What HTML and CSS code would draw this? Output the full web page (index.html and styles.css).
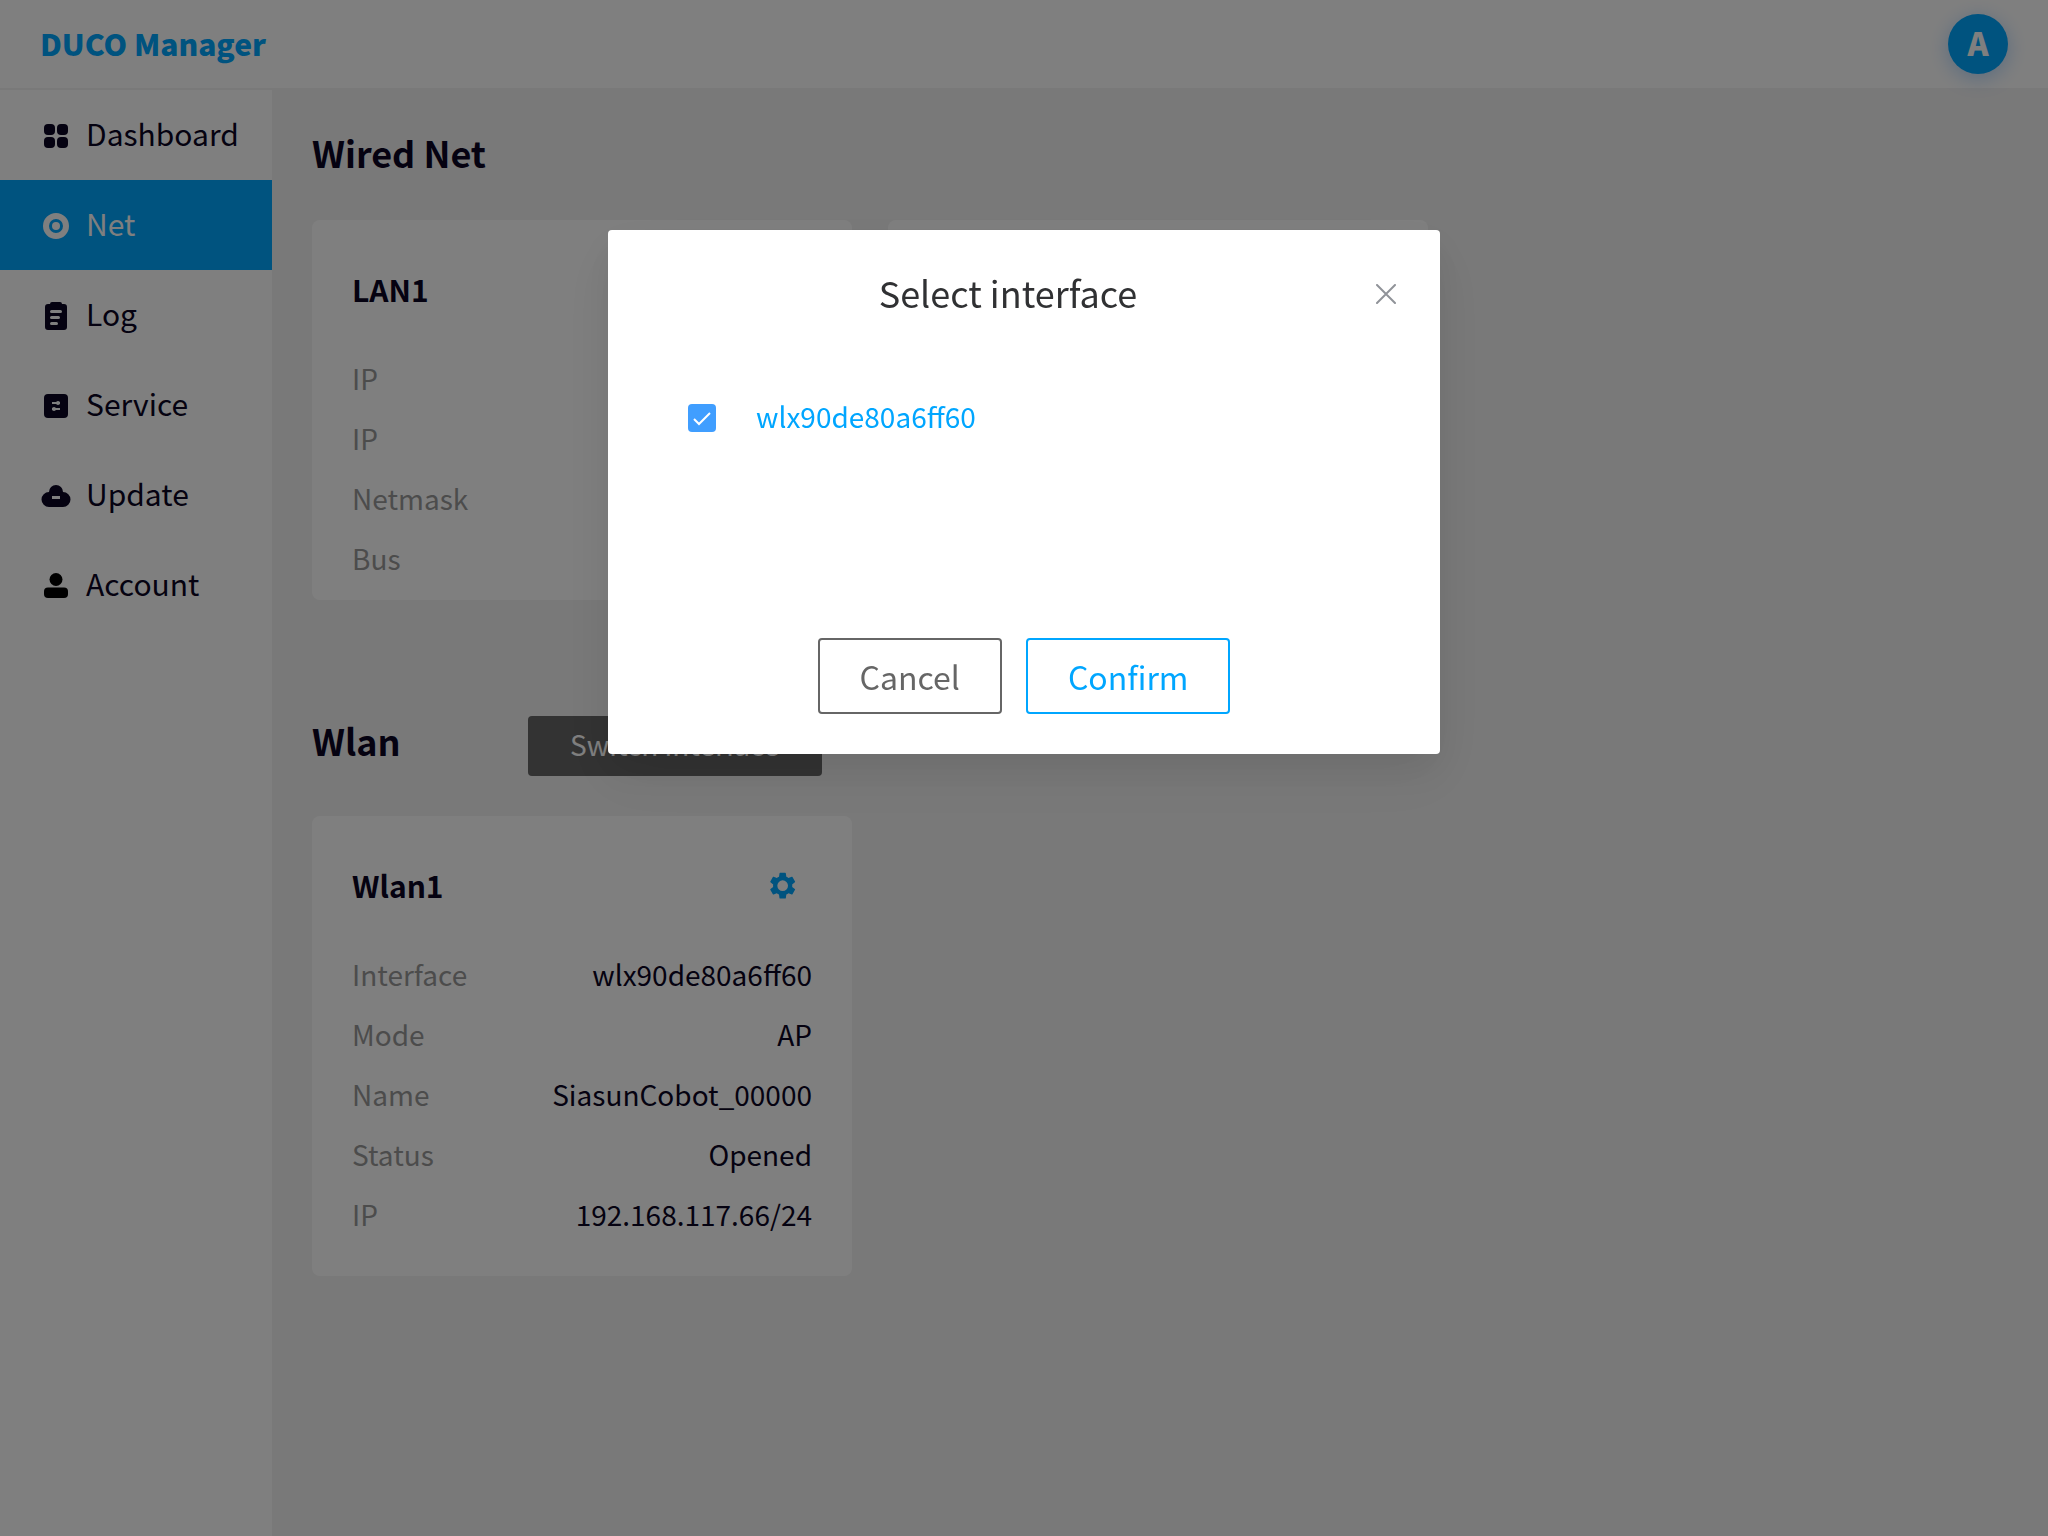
FILE: index.html
```html
<!DOCTYPE html>
<html lang="en">
<head>
<meta charset="utf-8">
<meta name="viewport" content="width=device-width, initial-scale=1">
<title>DUCO Manager</title>
<link rel="stylesheet" href="styles.css">
</head>
<body>
<div class="app">
  <header class="header">
    <a class="brand" href="#">DUCO Manager</a>
    <button class="avatar" type="button" aria-label="Account menu">A</button>
  </header>
  <div class="body">
    <nav class="sidebar">
      <a class="nav-item" href="#">
        <svg class="nav-icon" viewBox="0 0 28 28"><rect x="2" y="3" width="11" height="11" rx="4"/><rect x="15" y="3" width="11" height="11" rx="4"/><rect x="2" y="16" width="11" height="11" rx="4"/><rect x="15" y="16" width="11" height="11" rx="4"/></svg>
        <span class="nav-label">Dashboard</span>
      </a>
      <a class="nav-item nav-item--active" href="#">
        <svg class="nav-icon" viewBox="0 0 28 28"><circle cx="14" cy="15" r="10" fill="none" stroke="currentColor" stroke-width="6"/><circle cx="14" cy="15" r="4"/></svg>
        <span class="nav-label">Net</span>
      </a>
      <a class="nav-item" href="#">
        <svg class="nav-icon" viewBox="0 0 28 28"><path fill-rule="evenodd" d="M8 3q0-2 2-2h8q2 0 2 2h2q3 0 3 3v20q0 3-3 3H6q-3 0-3-3V6q0-3 3-3zM9.500 9a1.500 1.500 0 0 0 0 3h9a1.500 1.500 0 0 0 0-3zM9.500 15a1.500 1.500 0 0 0 0 3h7a1.500 1.500 0 0 0 0-3zM9.500 21a1.500 1.500 0 0 0 0 3h5a1.500 1.500 0 0 0 0-3z"/></svg>
        <span class="nav-label">Log</span>
      </a>
      <a class="nav-item" href="#">
        <svg class="nav-icon" viewBox="0 0 28 28"><rect x="2" y="3" width="24" height="24" rx="4"/><g fill="#fff"><rect x="10" y="11" width="8" height="2"/><circle cx="16" cy="12" r="2"/><rect x="10" y="17" width="8" height="2"/><circle cx="12" cy="18" r="2"/></g></svg>
        <span class="nav-label">Service</span>
      </a>
      <a class="nav-item" href="#">
        <svg class="nav-icon" viewBox="0 0 28 28"><path fill-rule="evenodd" d="M7 11a7 7 0 0 1 14 0a7.500 7.500 0 0 1 0 15H7a7.500 7.500 0 0 1 0-15zM10 15v3h8v-3z"/></svg>
        <span class="nav-label">Update</span>
      </a>
      <a class="nav-item" href="#">
        <svg class="nav-icon nav-icon--black" viewBox="0 0 28 28"><circle cx="14" cy="8.500" r="6.500"/><rect x="2" y="16.500" width="24" height="10.500" rx="4"/></svg>
        <span class="nav-label">Account</span>
      </a>
    </nav>
    <main class="content">
      <section>
        <div class="section-head"><h2 class="section-title">Wired Net</h2></div>
        <div class="cards">
          <article class="card card--wired">
            <div class="card-head"><h3 class="card-title">LAN1</h3></div>
            <dl class="props">
              <div class="prop"><dt>IP</dt><dd></dd></div>
              <div class="prop"><dt>IP</dt><dd></dd></div>
              <div class="prop"><dt>Netmask</dt><dd></dd></div>
              <div class="prop"><dt>Bus</dt><dd></dd></div>
            </dl>
          </article>
          <article class="card card--wired"></article>
        </div>
      </section>
      <section>
        <div class="section-head section-head--wlan">
          <h2 class="section-title">Wlan</h2>
          <button class="switch-btn" type="button">Switch interface</button>
        </div>
        <div class="cards">
          <article class="card">
            <div class="card-head">
              <h3 class="card-title">Wlan1</h3>
              <button class="gear-btn" type="button" aria-label="Settings">
                <svg class="gear" viewBox="1 1 21 21"><path d="M19.140 12.940c.040-.300.060-.610.060-.940 0-.320-.020-.640-.070-.940l2.030-1.580c.180-.140.230-.410.120-.610l-1.920-3.320c-.120-.220-.370-.290-.590-.220l-2.390.960c-.500-.380-1.030-.700-1.620-.940l-.360-2.540c-.040-.240-.240-.410-.480-.410h-3.840c-.240 0-.430.170-.470.410l-.360 2.540c-.590.240-1.130.570-1.620.940l-2.390-.960c-.220-.080-.470 0-.590.220L2.740 8.870c-.120.210-.080.470.120.610l2.030 1.580c-.050.300-.090.630-.090.940s.020.640.070.940l-2.030 1.580c-.180.140-.230.410-.120.610l1.920 3.320c.120.220.370.290.590.220l2.390-.960c.500.380 1.030.700 1.620.940l.360 2.540c.050.240.240.410.480.410h3.840c.240 0 .440-.170.470-.410l.360-2.540c.590-.240 1.130-.560 1.620-.940l2.390.960c.220.080.470 0 .590-.220l1.920-3.320c.120-.220.070-.470-.120-.610zM12 16a4 4 0 1 1 0-8 4 4 0 0 1 0 8z"/></svg>
              </button>
            </div>
            <dl class="props">
              <div class="prop"><dt>Interface</dt><dd>wlx90de80a6ff60</dd></div>
              <div class="prop"><dt>Mode</dt><dd>AP</dd></div>
              <div class="prop"><dt>Name</dt><dd>SiasunCobot_00000</dd></div>
              <div class="prop"><dt>Status</dt><dd>Opened</dd></div>
              <div class="prop"><dt>IP</dt><dd>192.168.117.66/24</dd></div>
            </dl>
          </article>
        </div>
      </section>
    </main>
  </div>
</div>

<div class="overlay">
  <div class="dialog" role="dialog" aria-modal="true" aria-labelledby="dialog-title">
    <div class="dialog-head">
      <h2 class="dialog-title" id="dialog-title">Select interface</h2>
      <button class="dialog-close" type="button" aria-label="Close">
        <svg class="close-icon" viewBox="0 0 20 20"><path d="M1 1l18 18M19 1L1 19" fill="none" stroke="currentColor" stroke-width="2" stroke-linecap="round"/></svg>
      </button>
    </div>
    <div class="dialog-body">
      <label class="option"><input class="option-box" type="checkbox" checked><span class="option-label">wlx90de80a6ff60</span></label>
    </div>
    <div class="dialog-foot">
      <button class="btn" type="button">Cancel</button>
      <button class="btn btn--primary" type="button">Confirm</button>
    </div>
  </div>
</div>
</body>
</html>
```
FILE: styles.css
```css
:root {
  --blue: #00a6ff;
  --ink: #0a0423;
  --muted: #999;
  --gray: #666;
}

* { box-sizing: border-box; }

body,
h2,
h3,
dl,
dd {
  margin: 0;
}

body,
button {
  font-family: "Noto Sans CJK SC", sans-serif;
}

body {
  color: var(--ink);
  background: #f2f2f2;
}

a { text-decoration: none; }

button {
  padding: 0;
  border: 0;
  background: none;
  cursor: pointer;
}

.app {
  display: flex;
  flex-direction: column;
  min-height: 100vh;
}

.header {
  display: flex;
  align-items: center;
  justify-content: space-between;
  height: 90px;
  padding: 0 40px;
  background: #fff;
  border-bottom: 2px solid #f2f2f2;
}

.brand {
  padding-bottom: 2px;
  color: var(--blue);
  font-size: 30px;
  font-weight: 900;
  line-height: 44px;
}

.avatar {
  width: 60px;
  height: 60px;
  padding-bottom: 4px;
  border-radius: 50%;
  background: var(--blue);
  box-shadow: 0 4px 20px rgba(0, 122, 255, 0.3);
  color: #fff;
  font-size: 32px;
  font-weight: 900;
  line-height: 56px;
}

.body {
  display: flex;
  flex: 1;
}

.sidebar {
  flex: none;
  width: 272px;
  background: #fff;
}

.nav-item {
  display: flex;
  align-items: center;
  gap: 16px;
  height: 90px;
  padding: 0 42px;
  color: var(--ink);
  font-size: 30px;
  line-height: 44px;
}

.nav-item--active {
  background: var(--blue);
  color: #fff;
}

.nav-icon {
  flex: none;
  width: 28px;
  height: 28px;
  fill: currentColor;
  overflow: visible;
}

.nav-icon--black { color: #000; }

.nav-label { padding-bottom: 4px; }

.content {
  flex: 1;
  padding: 0 40px;
}

.section-head {
  display: flex;
  align-items: center;
  height: 130px;
  padding-bottom: 4px;
}

.section-head--wlan {
  align-items: flex-start;
  gap: 127px;
  height: 216px;
  padding: 116px 0 0;
}

.section-title {
  padding-bottom: 2px;
  font-size: 36px;
  font-weight: 700;
  line-height: 48px;
}

.cards {
  display: flex;
  gap: 36px;
}

.card {
  width: 540px;
  padding: 0 40px 32px;
  border-radius: 8px;
  background: #fff;
}

.card--wired { padding-bottom: 12px; }

.card-head {
  display: flex;
  align-items: center;
  justify-content: space-between;
  height: 128px;
  padding: 10px 16px 0 0;
}

.card-title {
  font-size: 30px;
  font-weight: 700;
  line-height: 44px;
}

.gear {
  display: block;
  width: 28px;
  height: 28px;
  fill: var(--blue);
}

.prop {
  display: flex;
  justify-content: space-between;
  font-size: 28px;
  line-height: 60px;
}

.prop dt { color: var(--muted); }

.switch-btn {
  width: 294px;
  height: 60px;
  padding-bottom: 4px;
  border-radius: 4px;
  background: var(--gray);
  color: #fff;
  font-size: 28px;
  line-height: 56px;
}

.overlay {
  position: fixed;
  inset: 0;
  padding-top: 15vh;
  background: rgba(0, 0, 0, 0.5);
}

.dialog {
  width: 832px;
  max-width: 100%;
  margin: 0 auto;
  padding: 40px;
  border-radius: 4px;
  background: #fff;
  box-shadow: 0 24px 64px 8px rgba(0, 0, 0, 0.04), 0 16px 40px rgba(0, 0, 0, 0.08);
}

.dialog-head {
  display: flex;
  align-items: center;
  height: 48px;
}

.dialog-title {
  flex: 1;
  padding-bottom: 4px;
  color: #303133;
  font-size: 36px;
  font-weight: 400;
  line-height: 44px;
  text-align: center;
}

.dialog-close {
  display: flex;
  justify-content: flex-end;
  width: 32px;
  padding-right: 4px;
  color: #909399;
}

.close-icon {
  width: 20px;
  height: 20px;
}

.dialog-body {
  min-height: 320px;
  padding: 70px 40px 0;
}

.option {
  display: flex;
  align-items: center;
  gap: 40px;
  color: var(--blue);
  font-size: 28px;
  line-height: 56px;
}

.option-label { padding-bottom: 4px; }

.option-box {
  appearance: none;
  width: 28px;
  height: 28px;
  margin: 0;
  border-radius: 4px;
  background: #409eff url("data:image/svg+xml,%3Csvg xmlns='http://www.w3.org/2000/svg' viewBox='0 0 28 28'%3E%3Cpath d='M6 15l5 5L22 9' fill='none' stroke='white' stroke-width='2'/%3E%3C/svg%3E");
}

.dialog-foot {
  display: flex;
  justify-content: center;
  gap: 24px;
}

.btn {
  height: 76px;
  padding: 0 40px;
  border: 2px solid var(--gray);
  border-radius: 4px;
  color: var(--gray);
  font-size: 32px;
  line-height: 72px;
}

.btn--primary {
  border-color: var(--blue);
  color: var(--blue);
}
```
